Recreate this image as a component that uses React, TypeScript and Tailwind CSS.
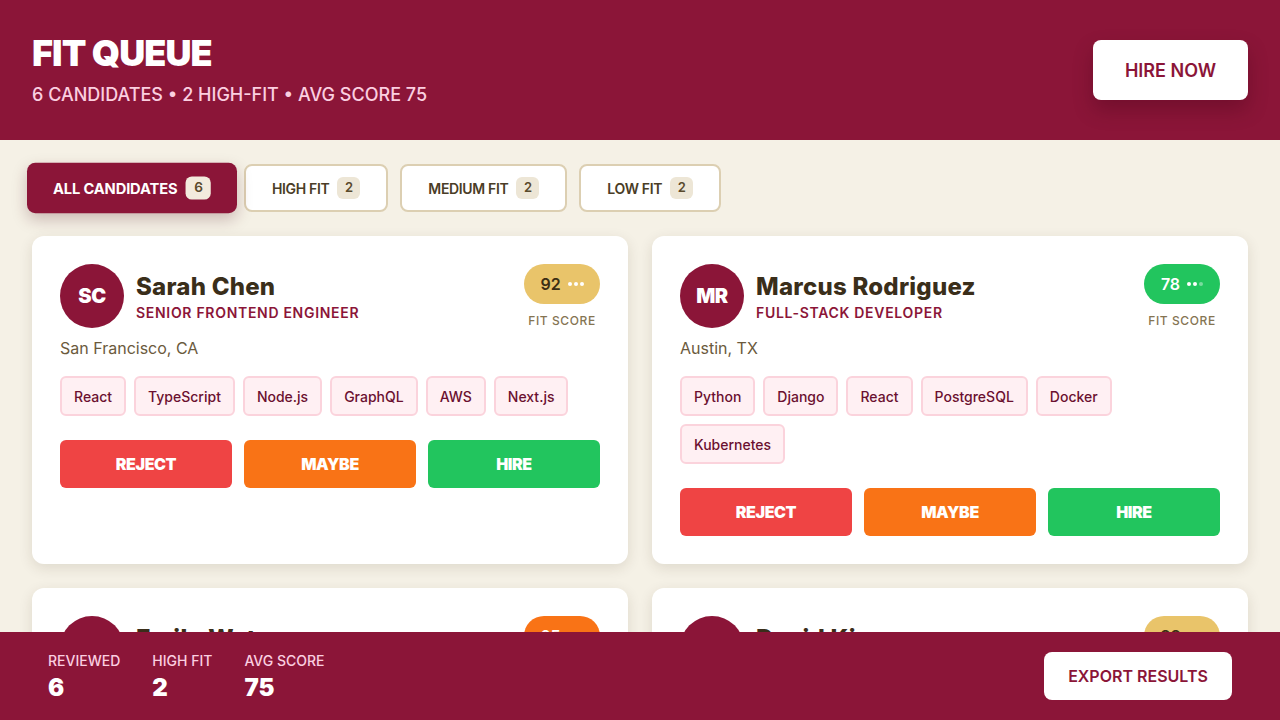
import React from "react";

type Cand = {
  name: string;
  initials: string;
  role: string;
  location: string;
  score: number;
  pill: string;
  pillText: string;
  dots: number;
  tags: string[];
};

const candidates: Cand[] = [
  {
    name: "Sarah Chen",
    initials: "SC",
    role: "Senior Frontend Engineer",
    location: "San Francisco, CA",
    score: 92,
    pill: "bg-[#E9C46A]",
    pillText: "text-[#3d2f14]",
    dots: 3,
    tags: ["React", "TypeScript", "Node.js", "GraphQL", "AWS", "Next.js"],
  },
  {
    name: "Marcus Rodriguez",
    initials: "MR",
    role: "Full-Stack Developer",
    location: "Austin, TX",
    score: 78,
    pill: "bg-[#22C55E]",
    pillText: "text-white",
    dots: 2,
    tags: ["Python", "Django", "React", "PostgreSQL", "Docker", "Kubernetes"],
  },
  {
    name: "Emily Watson",
    initials: "EW",
    role: "Backend Engineer",
    location: "Seattle, WA",
    score: 65,
    pill: "bg-[#F97316]",
    pillText: "text-white",
    dots: 2,
    tags: ["Go", "Rust", "gRPC", "Redis"],
  },
  {
    name: "David Kim",
    initials: "DK",
    role: "DevOps Engineer",
    location: "New York, NY",
    score: 88,
    pill: "bg-[#E9C46A]",
    pillText: "text-[#3d2f14]",
    dots: 3,
    tags: ["Terraform", "AWS", "Kubernetes", "CI/CD"],
  },
];

const tabs = [
  { label: "All Candidates", count: 6, active: true },
  { label: "High Fit", count: 2 },
  { label: "Medium Fit", count: 2 },
  { label: "Low Fit", count: 2 },
];

function Card({ c }: { c: Cand }) {
  return (
    <div className="bg-white rounded-xl p-7 shadow-[0_4px_14px_rgba(60,45,20,0.12)]">
      <div className="flex items-start justify-between">
        <div className="flex items-center gap-3">
          <div className="w-16 h-16 rounded-full bg-[#8B1538] flex items-center justify-center text-white text-[20px] font-black tracking-tight">
            {c.initials}
          </div>
          <div className="flex flex-col pt-[3px]">
            <div className="text-[24px] leading-[30px] font-extrabold tracking-[0.01em] text-[#3a2e1a]">
              {c.name}
            </div>
            <div className="text-[14px] leading-[20px] font-semibold uppercase tracking-wider text-[#8B1538] mt-[1px]">
              {c.role}
            </div>
          </div>
        </div>
        <div className="flex flex-col items-center">
          <div className={`h-10 w-[76px] rounded-full ${c.pill} flex items-center justify-center gap-[7px]`}>
            <span className={`text-[16px] font-semibold ${c.pillText}`}>{c.score}</span>
            <span className="flex gap-[2px]">
              {[0, 1, 2].map((i) => (
                <span
                  key={i}
                  className={`w-[4px] h-[4px] rounded-full ${i < c.dots ? "bg-white" : "bg-white/40"}`}
                />
              ))}
            </span>
          </div>
          <div className="mt-[8px] text-[12px] tracking-wider text-[#857452] font-medium">FIT SCORE</div>
        </div>
      </div>
      <div className="mt-[6px] text-[16px] leading-[24px] text-[#6b5a3d]">{c.location}</div>
      <div className="mt-[16px] flex flex-wrap gap-2">
        {c.tags.map((t) => (
          <span
            key={t}
            className="h-10 px-[12px] flex items-center rounded-md bg-[#FFF0F3] border-2 border-[#FBD3DC] text-[14px] font-medium text-[#6b1030]"
          >
            {t}
          </span>
        ))}
      </div>
      <div className="mt-6 grid grid-cols-3 gap-3">
        <button className="h-12 rounded-md bg-[#EF4444] text-white text-[16px] font-black tracking-tight">REJECT</button>
        <button className="h-12 rounded-md bg-[#F97316] text-white text-[16px] font-black tracking-tight">MAYBE</button>
        <button className="h-12 rounded-md bg-[#22C55E] text-white text-[16px] font-black tracking-tight">HIRE</button>
      </div>
    </div>
  );
}

export default function App() {
  return (
    <div
      className="min-h-screen bg-[#F5F1E6] pb-[120px]"
      style={{ fontFamily: "Inter, 'Noto Sans', sans-serif" }}
    >
      <header className="h-[140px] bg-[#8B1538] px-8 flex items-center justify-between">
        <div>
          <h1 className="text-[36px] leading-[40px] font-black tracking-tight text-white">FIT QUEUE</h1>
          <div className="mt-[10px] text-[18px] leading-[24px] font-medium text-[#FBCFE0]">
            6 CANDIDATES • 2 HIGH-FIT • AVG SCORE 75
          </div>
        </div>
        <button className="h-[60px] w-[155px] rounded-lg bg-white text-[#8B1538] text-[18px] font-semibold shadow-[0_10px_20px_rgba(60,0,20,0.3)]">
          HIRE NOW
        </button>
      </header>

      <main className="px-8 pt-6">
        <div className="flex gap-3">
          {tabs.map((t) =>
            t.active ? (
              <button
                key={t.label}
                className="h-12 w-[200px] scale-105 rounded-lg bg-[#8B1538] text-white flex items-center justify-center gap-2 text-[14px] font-bold tracking-[-0.01em] uppercase shadow-[0_6px_14px_rgba(80,20,30,0.25)]"
              >
                {t.label}
                <span className="w-[24px] h-[22px] rounded-md bg-[#F3EBDD] text-[#5a4a2c] text-[13px] font-semibold flex items-center justify-center">
                  {t.count}
                </span>
              </button>
            ) : (
              <button
                key={t.label}
                className="h-12 px-[26px] rounded-lg bg-white border-2 border-[#DCCFB2] text-[#4a3d26] flex items-center justify-center gap-2 text-[14px] font-semibold tracking-tight uppercase"
              >
                {t.label}
                <span className="w-[23px] h-[22px] rounded-md bg-[#EDE6D6] text-[#5a4a2c] text-[13px] font-semibold flex items-center justify-center">
                  {t.count}
                </span>
              </button>
            )
          )}
        </div>

        <div className="mt-6 grid grid-cols-2 gap-6">
          {candidates.map((c) => (
            <Card key={c.name} c={c} />
          ))}
        </div>
      </main>

      <footer className="fixed bottom-0 left-0 right-0 h-[88px] bg-[#8B1538] px-12 flex items-center justify-between">
        <div className="flex gap-8 pt-[3px]">
          {[
            ["REVIEWED", "6"],
            ["HIGH FIT", "2"],
            ["AVG SCORE", "75"],
          ].map(([l, v]) => (
            <div key={l} className="flex flex-col">
              <span className="text-[14px] leading-[18px] font-medium tracking-normal text-[#FBCFE0]">{l}</span>
              <span className="mt-[3px] text-[24px] leading-[30px] font-black text-white">{v}</span>
            </div>
          ))}
        </div>
        <button className="h-12 w-[188px] rounded-lg bg-white text-[#8B1538] text-[16px] font-semibold">
          EXPORT RESULTS
        </button>
      </footer>
    </div>
  );
}
